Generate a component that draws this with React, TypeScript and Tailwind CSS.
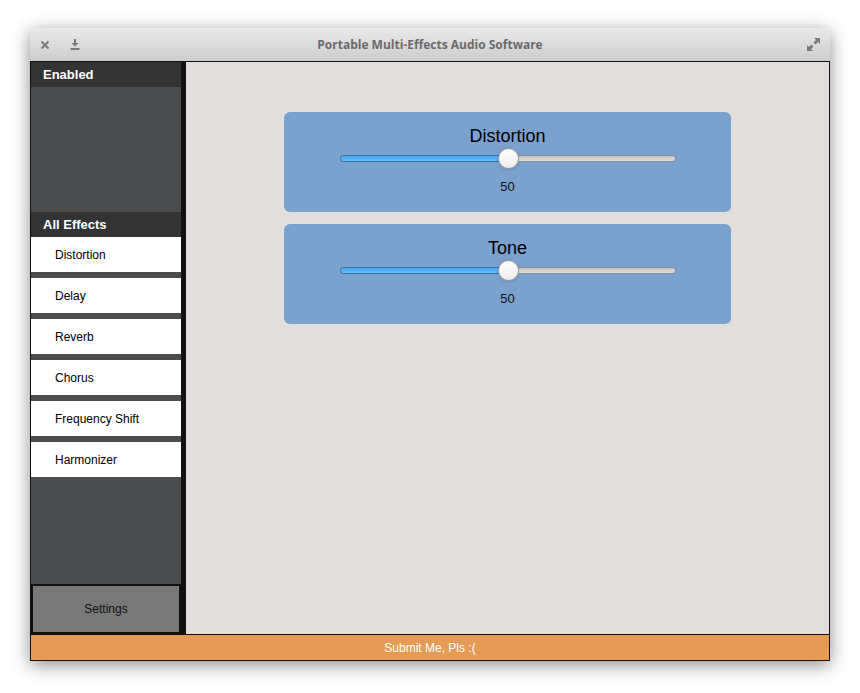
import { useState } from 'react';

const effects = ['Distortion', 'Delay', 'Reverb', 'Chorus', 'Frequency Shift', 'Harmonizer'];

const Slider = ({ value }: { value: number }) => (
  <div className="relative w-[336px] h-[21px] flex items-center">
    <div className="relative w-full h-[7px] rounded-full bg-gradient-to-b from-[#c4c4c4] to-[#dedede] border border-[#8f8f8f]">
      <div
        className="absolute -left-px -top-px h-[7px] rounded-l-full bg-gradient-to-b from-[#4aa3f0] to-[#6cbaf7] border border-[#2f6fae]"
        style={{ width: `calc(${value}% + 2px)` }}
      />
    </div>
    <div
      className="absolute top-0 w-[21px] h-[21px] -ml-[10px] rounded-full bg-gradient-to-b from-white to-[#ececec] border border-[#9b9b9b] shadow-sm"
      style={{ left: `${value}%` }}
    />
  </div>
);

const EffectCard = ({ name }: { name: string }) => {
  const [value] = useState(50);
  return (
    <div className="w-[447px] h-[100px] rounded-[6px] bg-[#7ba1ce] flex flex-col items-center pt-[13px]">
      <div className="text-[18px] leading-[22px] text-black">{name}</div>
      <div className="mt-[1px]"><Slider value={value} /></div>
      <div className="mt-[10px] text-[13px] leading-[16px] text-[#111]">{value}</div>
    </div>
  );
};

export default function App() {
  return (
    <div className="w-[860px] h-[693px] bg-white pt-[28px] pl-[30px]" style={{ fontFamily: '"Liberation Sans", Arial, sans-serif' }}>
      <div className="w-[800px] h-[633px] flex flex-col shadow-[0_4px_18px_rgba(0,0,0,0.45)] rounded-t-[3px] overflow-hidden">
        {/* title bar */}
        <div className="h-[34px] shrink-0 bg-gradient-to-b from-[#e9e9e9] to-[#cdcdcd] border-b border-[#111] grid grid-cols-[1fr_auto_1fr] items-center px-[10px]">
          <div className="flex items-center">
            <svg width="10" height="10" viewBox="0 0 10 10">
              <path d="M1.5 1.5 L8.5 8.5 M8.5 1.5 L1.5 8.5" stroke="#7a7a7a" strokeWidth="2" />
            </svg>
            <svg width="10" height="11" viewBox="0 0 10 11" className="ml-[20px]">
              <path d="M4 0 H6 V4 H8.5 L5 7.5 L1.5 4 H4 Z" fill="#7a7a7a" />
              <rect x="0.5" y="9" width="9" height="2" fill="#7a7a7a" />
            </svg>
          </div>
          <div className="text-center text-[12px] font-bold text-[#6b6b6b]" style={{ fontFamily: '"Open Sans", "Liberation Sans", sans-serif' }}>
            Portable Multi-Effects Audio Software
          </div>
          <div className="flex justify-end">
            <svg width="13" height="13" viewBox="0 0 13 13">
              <path d="M7 0 H13 V6 L11 4 L8.5 6.5 L6.5 4.5 L9 2 Z" fill="#7a7a7a" />
              <path d="M0 7 V13 H6 L4 11 L6.5 8.5 L4.5 6.5 L2 9 Z" fill="#7a7a7a" />
            </svg>
          </div>
        </div>

        {/* body */}
        <div className="flex-1 flex min-h-0 border-x border-[#111]">
          <div className="w-[150px] shrink-0 bg-[#4b4c4e] flex flex-col">
            <div className="h-[25px] bg-[#333333] text-white font-bold text-[13px] flex items-center px-[12px]">Enabled</div>
            <div className="h-[125px]" />
            <div className="h-[25px] bg-[#333333] text-white font-bold text-[13px] flex items-center px-[12px]">All Effects</div>
            <div className="flex flex-col gap-[6px]">
              {effects.map((e) => (
                <div key={e} className="h-[35px] bg-white text-[12px] text-black flex items-center pl-[24px]">{e}</div>
              ))}
            </div>
            <div className="flex-1" />
            <div className="h-[50px] bg-[#787878] border-2 border-[#111] flex items-center justify-center text-[12px] text-[#111]">Settings</div>
          </div>
          <div className="w-[5px] shrink-0 bg-[#111]" />
          <div className="flex-1 bg-[#e1dedd] flex flex-col items-center pt-[50px] gap-[12px]">
            <EffectCard name="Distortion" />
            <EffectCard name="Tone" />
          </div>
        </div>

        {/* footer */}
        <div className="h-[27px] shrink-0 bg-[#e59b53] border border-[#111] flex items-center justify-center text-white text-[12px]">
          Submit Me, Pls :(
        </div>
      </div>
    </div>
  );
}
